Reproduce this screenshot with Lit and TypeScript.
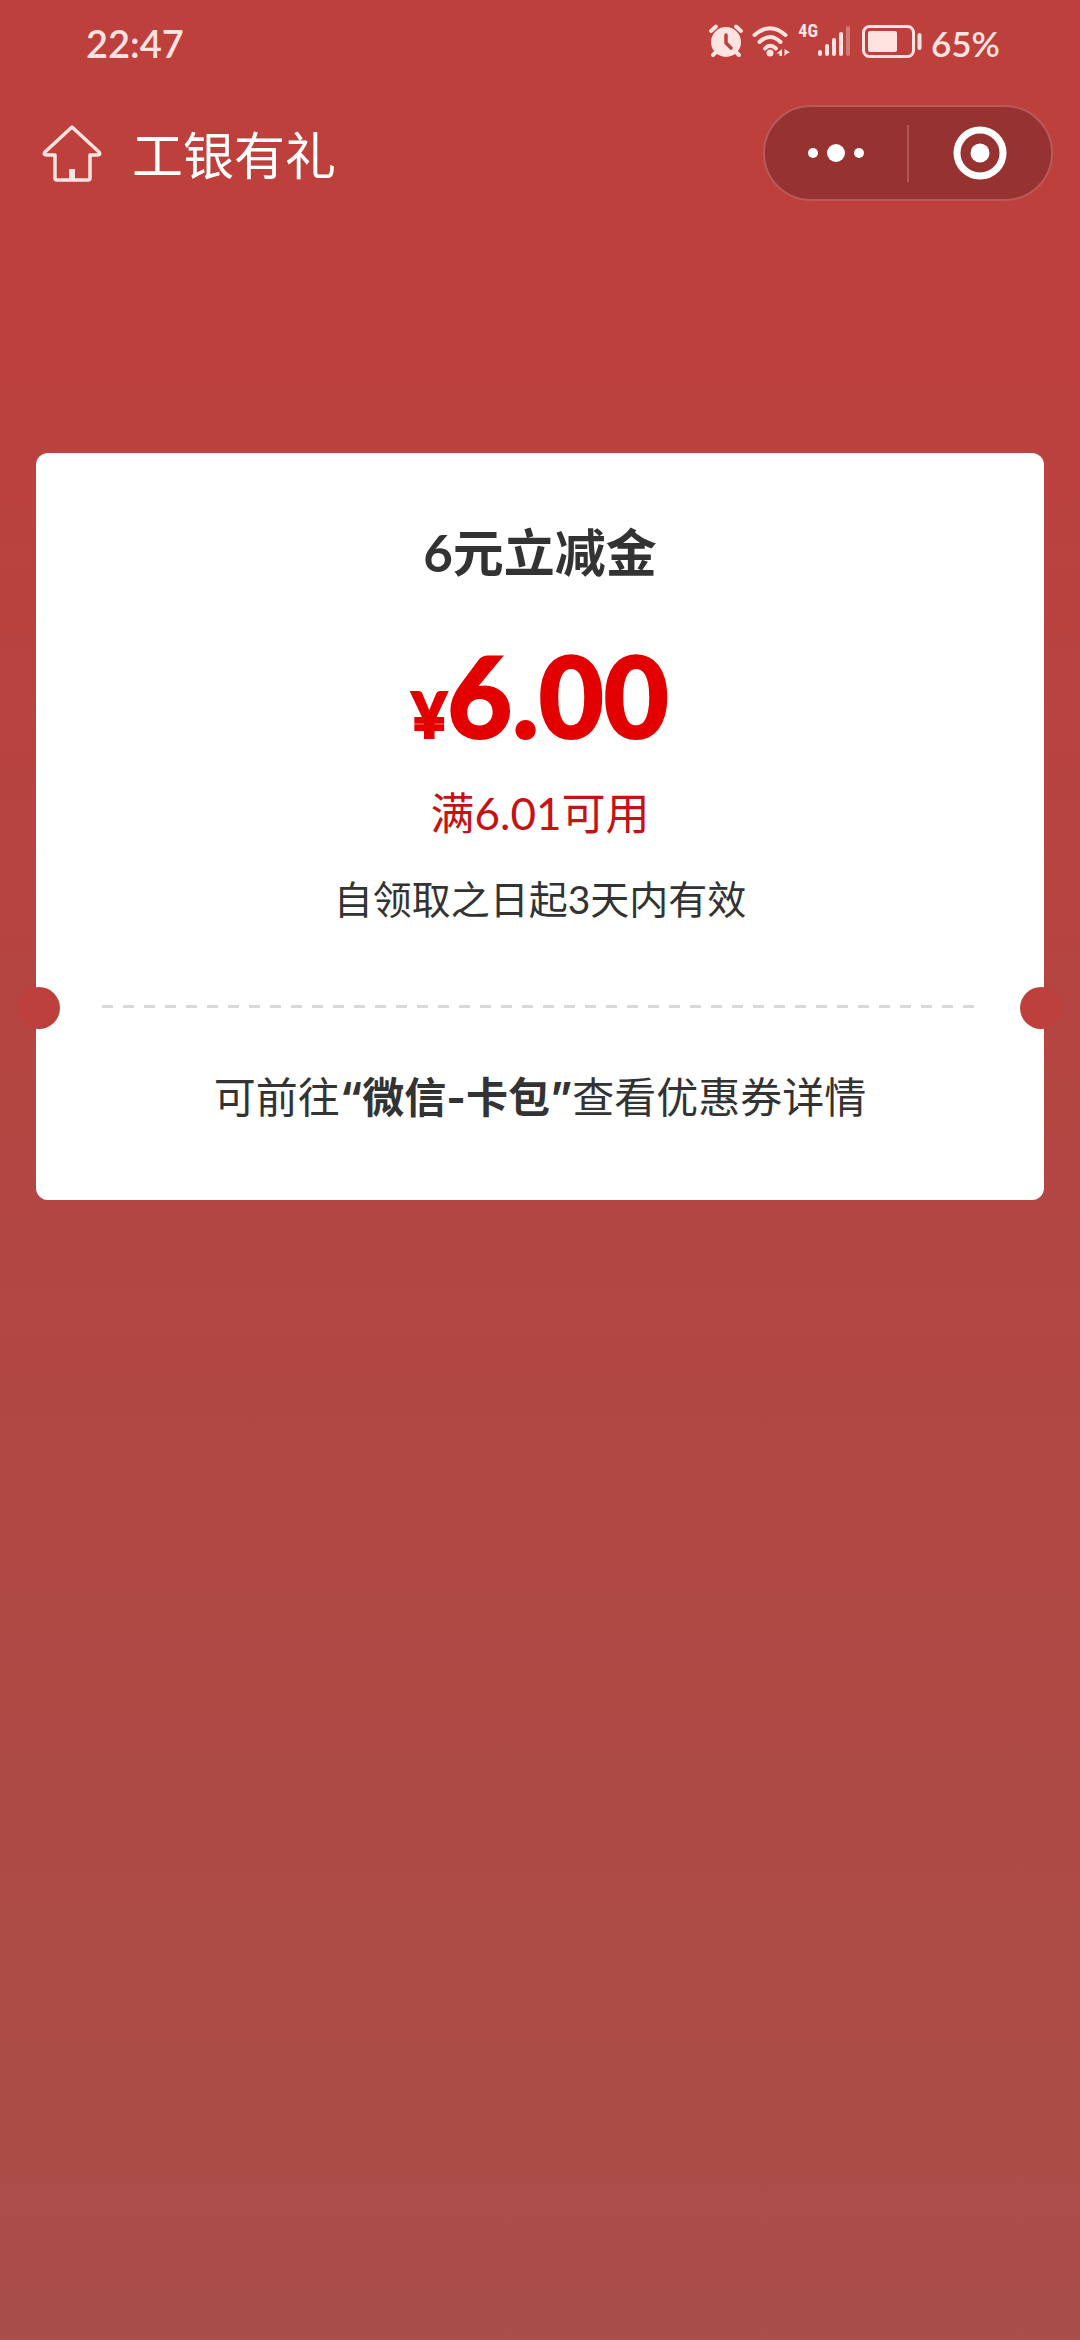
import { LitElement, html, css, svg } from "lit";
import { customElement, property } from "lit/decorators.js";

@customElement("status-bar")
class StatusBar extends LitElement {
  @property() time = "22:47";
  @property({ type: Number }) battery = 65;

  static styles = css`
    :host {
      display: flex;
      align-items: center;
      justify-content: space-between;
      height: 84px;
      padding: 0 80px 0 86px;
      color: #ffe3e0;
    }
    .time {
      font-size: 38px;
      line-height: 48px;
      font-weight: 600;
      padding-top: 2px;
    }
    .indicators {
      display: flex;
      align-items: center;
    }
    .glyph {
      display: block;
      overflow: visible;
      padding-bottom: 2px;
    }
    .alarm {
      margin-right: 9px;
    }
    .wifi {
      margin-right: 8px;
    }
    .network {
      align-self: flex-start;
      font-family: "Liberation Sans Narrow", "Roboto Condensed", Roboto, sans-serif;
      font-size: 18px;
      line-height: 24px;
      font-weight: 700;
    }
    .signal {
      margin-right: 12px;
    }
    .battery {
      margin-right: 9px;
    }
    .level {
      font-size: 35px;
      line-height: 44px;
      font-weight: 600;
      padding-top: 2px;
    }
  `;

  render() {
    const bars = [24, 18, 12, 6, 0];
    return html`
      <span class="time">${this.time}</span>
      <div class="indicators">
        <svg class="glyph alarm" width="34" height="34" viewBox="0 0 34 34" aria-hidden="true">
          <circle cx="17" cy="18" r="15" fill="currentColor" />
          <path d="M2 7 L7 2.500 M32 7 L27 2.500 M7 28 L4 31 M27 28 L30 31" stroke="currentColor" stroke-width="4" stroke-linecap="round" />
          <path d="M17 11 V19 L22 24" fill="none" stroke="#bd403d" stroke-width="3.500" stroke-linecap="round" stroke-linejoin="round" />
        </svg>
        <svg class="glyph wifi" width="38" height="34" viewBox="0 0 38 34" aria-hidden="true">
          <g fill="none" stroke="currentColor" stroke-width="4" stroke-linecap="round">
            <path d="M2.500 11 Q18 -2.500 33.500 11" />
            <path d="M7.500 18 Q18 8 28.500 18" />
            <path d="M13 24.500 Q18 19 24 24.500" />
          </g>
          <circle cx="18" cy="29" r="3.500" fill="currentColor" />
          <path d="M30 25 V32 H27.500 V29.500 H24.500 Z M32.500 25 L38 28.500 L35 29.500 L32.500 32 Z" fill="currentColor" />
        </svg>
        <span class="network">4G</span>
        <svg class="glyph signal" width="32" height="34" viewBox="0 0 32 34" aria-hidden="true">
          ${bars.map(
            (top, i) => svg`<rect x=${i * 7} y=${top + 2} width="4" height=${30 - top} rx="2" fill="currentColor" opacity=${i === 4 ? 0.35 : 1} />`
          )}
        </svg>
        <svg class="glyph battery" width="60" height="34" viewBox="0 0 60 34" aria-hidden="true">
          <rect x="1.500" y="2.500" width="50" height="30" rx="6" fill="none" stroke="currentColor" stroke-width="3" />
          <rect x="6" y="7" width="29" height="21" rx="2" fill="currentColor" />
          <rect x="55.500" y="9" width="4" height="17" rx="2" fill="currentColor" />
        </svg>
        <span class="level">${this.battery}%</span>
      </div>
    `;
  }
}

@customElement("nav-header")
class NavHeader extends LitElement {
  @property() heading = "";

  static styles = css`
    :host {
      display: flex;
      align-items: center;
      height: 138px;
      box-sizing: border-box;
      padding: 0 27px 0 42px;
    }
    button {
      border: 0;
      padding: 0;
      margin: 0;
      background: none;
      color: inherit;
      font: inherit;
      cursor: pointer;
    }
    svg {
      display: block;
    }
    .home {
      color: #ffe3e0;
      margin-right: 30px;
    }
    .heading {
      flex: 1;
      margin: 0;
      color: #fff;
      font-size: 51px;
      line-height: 60px;
      font-weight: 400;
      padding-top: 6px;
    }
    .capsule {
      display: flex;
      align-items: center;
      width: 290px;
      height: 96px;
      box-sizing: border-box;
      border: 2px solid #b95a58;
      border-radius: 48px;
      background: #963331;
      color: #fff;
    }
    .action {
      flex: 1;
      height: 100%;
      display: flex;
      align-items: center;
      justify-content: center;
    }
    .split {
      width: 2px;
      height: 57px;
      background: #b05653;
    }
  `;

  render() {
    return html`
      <button class="home" aria-label="首页">
        <svg width="60" height="60" viewBox="0 0 60 60" fill="none" aria-hidden="true">
          <path d="M30 4 L57 29 Q59 32 55.500 32 H48 V55 Q48 57 46 57 H15 Q13 57 13 55 V32 H4.500 Q1 32 3 29 Z" stroke="currentColor" stroke-width="3.500" stroke-linejoin="round" />
          <rect x="27" y="46" width="6" height="11" fill="currentColor" />
        </svg>
      </button>
      <h1 class="heading">${this.heading}</h1>
      <div class="capsule">
        <button class="action" aria-label="更多">
          <svg width="58" height="20" viewBox="0 0 58 20" fill="currentColor" aria-hidden="true">
            <circle cx="6" cy="10" r="5" />
            <circle cx="29" cy="10" r="9" />
            <circle cx="52" cy="10" r="5" />
          </svg>
        </button>
        <span class="split"></span>
        <button class="action" aria-label="关闭">
          <svg width="54" height="54" viewBox="0 0 54 54" aria-hidden="true">
            <circle cx="27" cy="27" r="23" fill="none" stroke="currentColor" stroke-width="7" />
            <circle cx="27" cy="27" r="9.500" fill="currentColor" />
          </svg>
        </button>
      </div>
    `;
  }
}

@customElement("coupon-card")
class CouponCard extends LitElement {
  static styles = css`
    :host {
      display: block;
      padding: 70px 0 76px;
      border-radius: 12px;
      background: #fff;
      color: #333;
      text-align: center;
    }
    p,
    h2 {
      margin: 0;
    }
    .name {
      font-size: 51px;
      line-height: 60px;
      font-weight: 700;
    }
    .price {
      margin-top: 64px;
      color: #e20000;
      font-size: 112px;
      line-height: 96px;
      font-weight: 900;
      -webkit-text-stroke: 2px #e20000;
    }
    .currency {
      font-size: 62px;
      line-height: 62px;
    }
    .rule {
      margin-top: 42px;
      color: #c41216;
      font-size: 44px;
      line-height: 52px;
    }
    .validity {
      margin-top: 36px;
      font-size: 39px;
      line-height: 48px;
    }
    .tear {
      position: relative;
      display: flex;
      align-items: center;
      height: 42px;
      box-sizing: border-box;
      margin-top: 64px;
      padding: 0 66px 4px;
    }
    .tear::before,
    .tear::after {
      content: "";
      position: absolute;
      top: 0;
      width: 42px;
      height: 42px;
      border-radius: 50%;
      background: #be403c;
    }
    .tear::before {
      left: -18px;
    }
    .tear::after {
      right: -18px;
    }
    .dashes {
      flex: 1;
      height: 3px;
      margin: 0;
      border: 0;
      background: repeating-linear-gradient(90deg, #d9d9d9 0 11px, transparent 11px 21px);
    }
    .hint {
      margin-top: 42px;
      font-size: 42px;
      line-height: 52px;
    }
    .place {
      font-family: Inter, "Noto Sans CJK SC", sans-serif;
      font-weight: 700;
    }
  `;

  render() {
    return html`
      <h2 class="name">6元立减金</h2>
      <p class="price"><span class="currency">¥</span>6.00</p>
      <p class="rule">满6.01可用</p>
      <p class="validity">自领取之日起3天内有效</p>
      <div class="tear"><hr class="dashes" /></div>
      <p class="hint">可前往<b class="place">“微信-卡包”</b>查看优惠券详情</p>
    `;
  }
}

@customElement("app-root")
class AppRoot extends LitElement {
  static styles = css`
    :host {
      display: block;
      min-height: 100vh;
      background: linear-gradient(180deg, #bd403d 0, #bd403d 11%, #b34642 50%, #aa4e49 100%);
      font-family: Lato, "Noto Sans CJK SC", sans-serif;
    }
    .content {
      padding: 231px 36px 0;
    }
  `;

  render() {
    return html`
      <status-bar></status-bar>
      <nav-header heading="工银有礼"></nav-header>
      <main class="content"><coupon-card></coupon-card></main>
    `;
  }
}
